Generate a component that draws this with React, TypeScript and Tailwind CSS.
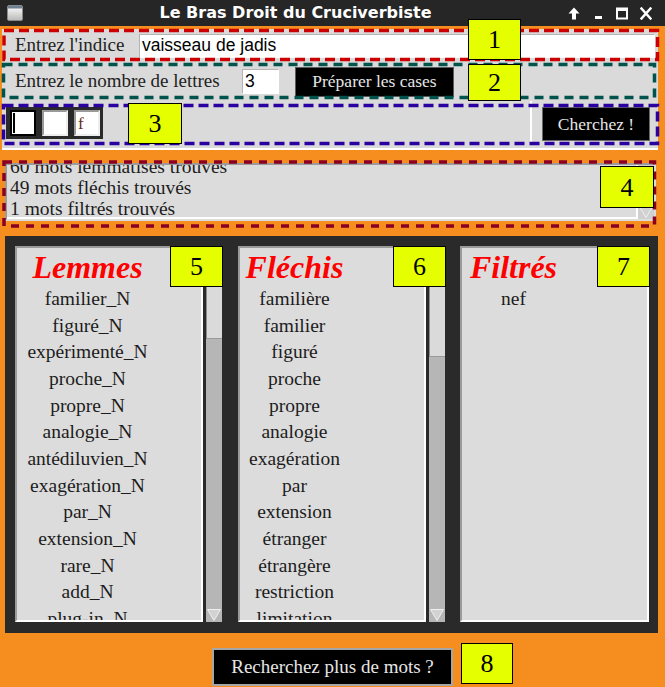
import React from "react";

const lemmes = [
  "familier_N",
  "figuré_N",
  "expérimenté_N",
  "proche_N",
  "propre_N",
  "analogie_N",
  "antédiluvien_N",
  "exagération_N",
  "par_N",
  "extension_N",
  "rare_N",
  "add_N",
  "plug-in_N",
];

const flechis = [
  "familière",
  "familier",
  "figuré",
  "proche",
  "propre",
  "analogie",
  "exagération",
  "par",
  "extension",
  "étranger",
  "étrangère",
  "restriction",
  "limitation",
];

const filtres = ["nef"];

function DownArrow() {
  return (
    <svg width="16" height="14" viewBox="0 0 16 14" className="block">
      <polygon points="1.5,1.5 14.5,1.5 8,12.5" fill="#d2d2d2" stroke="#f0f0f0" strokeWidth="1" />
    </svg>
  );
}

function Scrollbar({ thumb }: { thumb: string }) {
  return (
    <div className="ml-[3px] flex h-[376px] w-[16px] flex-col bg-[#b6b6b6]">
      <div className="h-[14px]" />
      <div className={thumb} />
      <div className="flex-1" />
      <DownArrow />
    </div>
  );
}

function ListBox({ title, items, block }: { title: string; items: string[]; block: string }) {
  return (
    <div className="h-[376px] w-[188px] overflow-hidden border-2 border-t-[#9b9b9b] border-l-[#9b9b9b] border-b-white border-r-white bg-[#dcdcdc]">
      <div className={block}>
        <div className="flex h-[38px] items-center justify-center whitespace-nowrap text-[32px] font-bold italic text-[#ff0000]">
          {title}
        </div>
        {items.map((item) => (
          <div key={item} className="h-[26.67px] whitespace-nowrap text-center text-[19.5px] leading-[26.67px] text-[#1c1c1c]">
            {item}
          </div>
        ))}
      </div>
    </div>
  );
}

function Tag({ n, className }: { n: string; className: string }) {
  return (
    <div className={`absolute flex items-center justify-center border border-black bg-[#e6ff00] text-[26px] text-black ${className}`}>
      {n}
    </div>
  );
}

function TitleBar() {
  return (
    <div className="flex h-[26px] items-center bg-[#262626]">
      <div className="pl-[7px]">
        <svg width="16" height="16" viewBox="0 0 16 16" className="block">
          <defs>
            <linearGradient id="ico" x1="0" y1="0" x2="0" y2="1">
              <stop offset="0" stopColor="#ffffff" />
              <stop offset="1" stopColor="#b9b9b9" />
            </linearGradient>
          </defs>
          <rect x="0.5" y="0.5" width="15" height="15" rx="1.5" fill="url(#ico)" stroke="#8a8a8a" />
          <rect x="1" y="1" width="14" height="2.5" fill="#6f7f92" />
        </svg>
      </div>
      <div className="flex-1 text-center font-['DejaVu_Sans',sans-serif] text-[16px] font-bold text-white">
        Le Bras Droit du Cruciverbiste
      </div>
      <div className="flex items-center gap-[12px] pr-[13px]">
        <svg width="12" height="13" viewBox="0 0 12 13" className="block">
          <path d="M6 0.5 L11.5 6.5 H8 V12.5 H4 V6.5 H0.5 Z" fill="white" />
        </svg>
        <svg width="12" height="13" viewBox="0 0 12 13" className="block">
          <rect x="3" y="9" width="7" height="3" fill="white" />
        </svg>
        <svg width="12" height="13" viewBox="0 0 12 13" className="block">
          <rect x="1" y="1.5" width="10" height="10" fill="none" stroke="white" strokeWidth="2" />
          <rect x="1" y="1" width="10" height="3" fill="white" />
        </svg>
        <svg width="12" height="13" viewBox="0 0 12 13" className="block">
          <path d="M1.5 1.5 L10.5 11.5 M10.5 1.5 L1.5 11.5" stroke="white" strokeWidth="2.5" strokeLinecap="square" />
        </svg>
      </div>
    </div>
  );
}

export default function App() {
  return (
    <div className="relative h-[687px] w-[665px] overflow-hidden bg-[#f68e1f] font-['Liberation_Serif',serif]">
      <TitleBar />

      {/* saisie */}
      <div className="mx-[2px] mt-[3px] w-[656px] bg-[#dadada] text-[#222]">
        <div className="flex h-[33px] items-center pl-[13px] pr-[3px]">
          <span className="w-[124px] whitespace-nowrap text-[19px]">Entrez l'indice</span>
          <div className="flex h-[24px] flex-1 items-center border border-t-[#b4b4b4] border-l-[#b4b4b4] border-b-white border-r-white bg-white pl-[2px] font-['Liberation_Sans',sans-serif] text-[17.5px] text-black">
            vaisseau de jadis
          </div>
        </div>

        <div className="flex h-[39px] items-center pl-[13px]">
          <span className="w-[227px] whitespace-nowrap text-[19px]">Entrez le nombre de lettres</span>
          <div className="flex h-[25px] w-[37px] items-center border border-t-[#b4b4b4] border-l-[#b4b4b4] border-b-white border-r-white bg-white pl-[2px] font-['Liberation_Sans',sans-serif] text-[17.5px] text-black">
            3
          </div>
          <button className="ml-[16px] flex h-[30px] w-[159px] items-center justify-center border border-[#5c5c5c] bg-black text-[17.5px] text-[#e6e6e6]">
            Préparer les cases
          </button>
        </div>

        <div className="flex h-[49px] border-b-2 border-white">
          <div className="h-[42px] w-[530px] border-r-2 border-white pl-[4px] pt-[6px]">
            <div className="flex h-[32px] w-[97px] items-center gap-[6px] bg-[#2a2a2a] pl-[4px]">
              <div className="relative h-[26px] w-[26px] border-2 border-black bg-white">
                <div className="absolute left-[1px] top-[1px] h-[20px] w-[2px] bg-black" />
              </div>
              <div className="h-[26px] w-[26px] border-2 border-t-[#9a9a9a] border-l-[#9a9a9a] border-b-[#eeeeee] border-r-[#eeeeee] bg-white" />
              <div className="flex h-[26px] w-[26px] items-center border-2 border-t-[#9a9a9a] border-l-[#9a9a9a] border-b-[#eeeeee] border-r-[#eeeeee] bg-white pl-[2px] text-[17px] leading-none text-[#6b2d0f]">
                f
              </div>
            </div>
          </div>
          <button className="ml-[10px] mt-[6px] flex h-[34px] w-[108px] items-center justify-center border border-[#6a6a6a] bg-black text-[17.5px] text-[#e6e6e6]">
            Cherchez !
          </button>
        </div>
      </div>

      {/* compte rendu */}
      <div className="ml-[5px] mt-[13px] flex h-[58px] w-[651px] border-2 border-t-[#9b9b9b] border-l-[#9b9b9b] border-b-[#dcdcdc] border-r-[#dcdcdc] bg-[#dcdcdc]">
        <div className="flex-1 overflow-hidden border-b-2 border-r-2 border-white pl-[3px] text-[19.5px] leading-[21px] text-[#1c1c1c]">
          <div className="-mt-[9px]">
            <div>60 mots lemmatisés trouvés</div>
            <div>49 mots fléchis trouvés</div>
            <div>1 mots filtrés trouvés</div>
          </div>
        </div>
        <div className="flex w-[16px] flex-col justify-end bg-[#d0d0d0]">
          <DownArrow />
        </div>
      </div>

      {/* résultats */}
      <div className="ml-[5px] mt-[15px] flex h-[397px] w-[653px] bg-[#2a2a2a] pl-[10px] pt-[10px]">
        <div className="flex">
          <ListBox title="Lemmes" items={lemmes} block="w-[141px]" />
          <Scrollbar thumb="h-[79px] border-l border-b border-l-[#8c8c8c] border-b-[#9a9a9a] bg-[#dadada]" />
        </div>
        <div className="ml-[16px] flex">
          <ListBox title="Fléchis" items={flechis} block="w-[109px]" />
          <Scrollbar thumb="h-[97px] border-l border-b border-l-[#8c8c8c] border-b-[#9a9a9a] bg-[#dadada]" />
        </div>
        <div className="ml-[15px] flex">
          <div className="h-[376px] w-[189px] overflow-hidden border-2 border-t-[#9b9b9b] border-l-[#9b9b9b] border-b-white border-r-white bg-[#dcdcdc]">
            <div className="w-[103px]">
              <div className="flex h-[38px] items-center justify-center whitespace-nowrap text-[32px] font-bold italic text-[#ff0000]">
                Filtrés
              </div>
              {filtres.map((item) => (
                <div key={item} className="h-[26.67px] text-center text-[19.5px] leading-[26.67px] text-[#1c1c1c]">
                  {item}
                </div>
              ))}
            </div>
          </div>
        </div>
      </div>

      <div className="mt-[15px] flex justify-center">
        <button className="flex h-[38px] w-[241px] items-center justify-center border-2 border-[#a6a6a6] bg-black text-[19px] text-[#e6e6e6]">
          Recherchez plus de mots ?
        </button>
      </div>

      {/* annotations */}
      <svg width="665" height="687" viewBox="0 0 665 687" className="pointer-events-none absolute left-0 top-0">
        <rect x="4" y="30.5" width="653.5" height="29" fill="none" stroke="#cc0000" strokeWidth="3.5" strokeDasharray="10 5" />
        <rect x="3.5" y="64.5" width="651" height="33" fill="none" stroke="#00524c" strokeWidth="3.5" strokeDasharray="9 6" />
        <rect x="3.5" y="105.5" width="654" height="38" fill="none" stroke="#2a00a0" strokeWidth="3.5" strokeDasharray="10 5" />
        <rect x="4" y="162" width="650.5" height="64" fill="none" stroke="#8a0022" strokeWidth="3.5" strokeDasharray="8 7" />
      </svg>

      <Tag n="1" className="left-[468px] top-[19px] h-[41px] w-[53px]" />
      <Tag n="2" className="left-[468px] top-[64px] h-[37px] w-[53px]" />
      <Tag n="3" className="left-[128px] top-[103px] h-[41px] w-[54px]" />
      <Tag n="4" className="left-[600px] top-[166px] h-[42px] w-[54px]" />
      <Tag n="5" className="left-[170px] top-[246px] h-[41px] w-[53px]" />
      <Tag n="6" className="left-[393px] top-[246px] h-[41px] w-[53px]" />
      <Tag n="7" className="left-[597px] top-[246px] h-[41px] w-[53px]" />
      <Tag n="8" className="left-[461px] top-[643px] h-[41px] w-[52px]" />
    </div>
  );
}
